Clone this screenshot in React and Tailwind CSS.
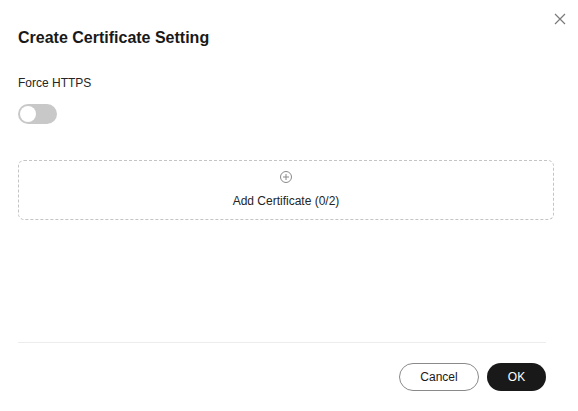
import React, { useState } from 'react';

const font = { fontFamily: '"Liberation Sans", Arial, sans-serif' };

export default function App() {
  const [forceHttps, setForceHttps] = useState(false);

  return (
    <div className="relative w-[578px] h-[411px] bg-white flex flex-col font-['Liberation_Sans',Arial,sans-serif]" style={font}>
      {/* Close */}
      <button className="absolute top-[13px] left-[554px] w-[12px] h-[12px] text-[#7a7a7a]">
        <svg viewBox="0 0 12 12" width="12" height="12" fill="none" stroke="currentColor" strokeWidth="1.2">
          <path d="M1 1 L11 11 M11 1 L1 11" />
        </svg>
      </button>

      {/* Body */}
      <div className="flex-1 flex flex-col pl-[18px] pr-[24px] pt-[26px]">
        <h2 className="text-[16px] leading-[24px] font-bold text-[#191919]">Create Certificate Setting</h2>

        <label className="mt-[24px] text-[12px] leading-[18px] text-[#252525]">Force HTTPS</label>

        <button
          onClick={() => setForceHttps(v => !v)}
          className={`mt-[12px] w-[39px] h-[20px] rounded-full p-[2px] flex items-center ${forceHttps ? 'bg-[#191919] justify-end' : 'bg-[#c8c8c8] justify-start'}`}
        >
          <span className="w-[16px] h-[16px] rounded-full bg-white" />
        </button>

        <div className="mt-[36px] h-[60px] rounded-[6px] border border-dashed border-[#c4c4c4] flex flex-col items-center pt-[10px] gap-[9px]">
          <svg viewBox="0 0 12 12" width="12" height="12" fill="none" stroke="#8a8a8a" strokeWidth="1">
            <circle cx="6" cy="6" r="5.5" />
            <path d="M6 3 V9 M3 6 H9" />
          </svg>
          <span className="text-[12px] leading-[18px] text-[#252525]">Add Certificate (0/2)</span>
        </div>
      </div>

      {/* Footer */}
      <div className="ml-[18px] mr-[32px] border-t border-[#ececec] pt-[20px] pb-[20px] flex justify-end gap-[8px]">
        <button className="w-[80px] h-[28px] rounded-full border border-[#8a8a8a] text-[12px] text-[#191919] bg-white">
          Cancel
        </button>
        <button className="w-[59px] h-[28px] rounded-full bg-[#191919] text-[12px] text-white">
          OK
        </button>
      </div>
    </div>
  );
}
